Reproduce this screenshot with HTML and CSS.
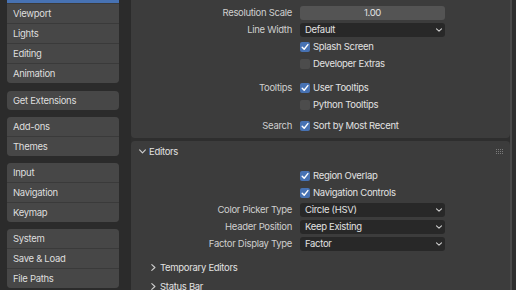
FILE: index.html
```html
<!DOCTYPE html>
<html lang="en">
<head>
    <meta charset="UTF-8">
    <title>Preferences</title>
    <link rel="stylesheet" href="styles.css">
</head>
<body>
    <div class="app">
        <nav class="nav">
            <div class="nav-group nav-first">
                <div class="nav-btn active">Interface</div>
                <div class="nav-btn">Viewport</div>
                <div class="nav-btn">Lights</div>
                <div class="nav-btn">Editing</div>
                <div class="nav-btn">Animation</div>
            </div>
            <div class="nav-group nav-ext">
                <div class="nav-btn">Get Extensions</div>
            </div>
            <div class="nav-group">
                <div class="nav-btn">Add-ons</div>
                <div class="nav-btn">Themes</div>
            </div>
            <div class="nav-group">
                <div class="nav-btn">Input</div>
                <div class="nav-btn">Navigation</div>
                <div class="nav-btn">Keymap</div>
            </div>
            <div class="nav-group">
                <div class="nav-btn">System</div>
                <div class="nav-btn">Save &amp; Load</div>
                <div class="nav-btn">File Paths</div>
            </div>
        </nav>

        <main class="region">
            <div class="panels">
                <section class="panel panel-display">
                    <div class="block">
                        <div class="row">
                            <span class="label">Resolution Scale</span>
                            <div class="ctrl"><div class="num">1.00</div></div>
                        </div>
                        <div class="row">
                            <span class="label">Line Width</span>
                            <div class="ctrl">
                                <div class="menu">Default
                                    <svg class="caret" width="6" height="4" viewBox="0 0 6 4"><path d="M0.5 0.8 L3 3.2 L5.5 0.8" /></svg>
                                </div>
                            </div>
                        </div>
                        <div class="row">
                            <span class="label"></span>
                            <div class="ctrl"><span class="check on"><svg width="10" height="10" viewBox="0 0 10 10"><path d="M2.2 5.2 L4.2 7.3 L7.9 2.6" /></svg></span>Splash Screen</div>
                        </div>
                        <div class="row">
                            <span class="label"></span>
                            <div class="ctrl"><span class="check"></span>Developer Extras</div>
                        </div>
                    </div>

                    <div class="block block-tips">
                        <div class="row">
                            <span class="label">Tooltips</span>
                            <div class="ctrl"><span class="check on"><svg width="10" height="10" viewBox="0 0 10 10"><path d="M2.2 5.2 L4.2 7.3 L7.9 2.6" /></svg></span>User Tooltips</div>
                        </div>
                        <div class="row">
                            <span class="label"></span>
                            <div class="ctrl"><span class="check"></span>Python Tooltips</div>
                        </div>
                    </div>

                    <div class="block block-search">
                        <div class="row">
                            <span class="label">Search</span>
                            <div class="ctrl"><span class="check on"><svg width="10" height="10" viewBox="0 0 10 10"><path d="M2.2 5.2 L4.2 7.3 L7.9 2.6" /></svg></span>Sort by Most Recent</div>
                        </div>
                    </div>
                </section>

                <section class="panel panel-editors">
                    <header class="panel-head">
                        <svg class="chev-down" width="7" height="5" viewBox="0 0 7 5"><path d="M0.6 0.8 L3.5 3.9 L6.4 0.8" /></svg>
                        <span>Editors</span>
                        <svg class="grip" width="8" height="5" viewBox="0 0 8 5">
                            <rect x="0" y="0" width="1" height="1" /><rect x="2" y="0" width="1" height="1" /><rect x="4" y="0" width="1" height="1" /><rect x="6" y="0" width="1" height="1" />
                            <rect x="0" y="2" width="1" height="1" /><rect x="2" y="2" width="1" height="1" /><rect x="4" y="2" width="1" height="1" /><rect x="6" y="2" width="1" height="1" />
                            <rect x="0" y="4" width="1" height="1" /><rect x="2" y="4" width="1" height="1" /><rect x="4" y="4" width="1" height="1" /><rect x="6" y="4" width="1" height="1" />
                        </svg>
                    </header>
                    <div class="panel-body">
                        <div class="row">
                            <span class="label"></span>
                            <div class="ctrl"><span class="check on"><svg width="10" height="10" viewBox="0 0 10 10"><path d="M2.2 5.2 L4.2 7.3 L7.9 2.6" /></svg></span>Region Overlap</div>
                        </div>
                        <div class="row">
                            <span class="label"></span>
                            <div class="ctrl"><span class="check on"><svg width="10" height="10" viewBox="0 0 10 10"><path d="M2.2 5.2 L4.2 7.3 L7.9 2.6" /></svg></span>Navigation Controls</div>
                        </div>
                        <div class="row">
                            <span class="label">Color Picker Type</span>
                            <div class="ctrl">
                                <div class="menu">Circle (HSV)
                                    <svg class="caret" width="6" height="4" viewBox="0 0 6 4"><path d="M0.5 0.8 L3 3.2 L5.5 0.8" /></svg>
                                </div>
                            </div>
                        </div>
                        <div class="row">
                            <span class="label">Header Position</span>
                            <div class="ctrl">
                                <div class="menu">Keep Existing
                                    <svg class="caret" width="6" height="4" viewBox="0 0 6 4"><path d="M0.5 0.8 L3 3.2 L5.5 0.8" /></svg>
                                </div>
                            </div>
                        </div>
                        <div class="row">
                            <span class="label">Factor Display Type</span>
                            <div class="ctrl">
                                <div class="menu">Factor
                                    <svg class="caret" width="6" height="4" viewBox="0 0 6 4"><path d="M0.5 0.8 L3 3.2 L5.5 0.8" /></svg>
                                </div>
                            </div>
                        </div>

                        <div class="subpanels">
                            <div class="sub-head">
                                <svg class="chev-right" width="5" height="7" viewBox="0 0 5 7"><path d="M0.8 0.6 L3.9 3.5 L0.8 6.4" /></svg>
                                <span>Temporary Editors</span>
                            </div>
                            <div class="sub-head">
                                <svg class="chev-right" width="5" height="7" viewBox="0 0 5 7"><path d="M0.8 0.6 L3.9 3.5 L0.8 6.4" /></svg>
                                <span>Status Bar</span>
                            </div>
                        </div>
                    </div>
                </section>
            </div>
            <div class="scrollbar"></div>
        </main>
    </div>
</body>
</html>
```

FILE: styles.css
```css
html, body {
    margin: 0;
    padding: 0;
    height: 100%;
    overflow: hidden;
}
body {
    font-family: Inter, "DejaVu Sans", sans-serif;
    font-size: 9.5px;
    letter-spacing: -0.3px;
    color: #e0e0e0;
    background: #2e2e2e;
}
.app {
    display: flex;
    height: 290px;
}

/* Left navigation */
.nav {
    width: 112px;
    flex: none;
    padding: 0 12px 0 7px;
    background: #2b2b2b;
}
.nav-group {
    margin-top: 7px;
    background: #3a3a3a;
    border-radius: 4px;
    overflow: hidden;
}
.nav-first {
    margin-top: -16px;
}
.nav-ext {
    margin-top: 8px;
}
.nav-btn {
    height: 19px;
    line-height: 19px;
    padding-left: 6px;
    background: #474747;
    color: #dedede;
}
.nav-btn + .nav-btn {
    margin-top: 1px;
}
.nav-btn.active {
    background: #4772b3;
    color: #fff;
}

/* Main region */
.region {
    flex: 1;
    display: flex;
    background: #2e2e2e;
}
.panels {
    flex: 1;
}
.scrollbar {
    width: 2px;
    margin: 0 4px 0 0;
    background: #4a4a4a;
}
.panel {
    background: #3c3c3c;
    border-radius: 4px;
}
.panel-display {
    margin-top: -6px;
    padding: 10px 0 4px;
}
.panel-editors {
    margin-top: 3px;
}
.block-tips {
    margin-top: 7px;
}
.block-search {
    margin-top: 4px;
}
.row {
    display: grid;
    grid-template-columns: 161px 145px;
    column-gap: 8px;
    height: 17px;
    align-items: center;
}
.label {
    text-align: right;
    color: #cfcfcf;
}
.ctrl {
    display: flex;
    align-items: center;
    color: #e2e2e2;
}
.num {
    flex: 1;
    height: 14px;
    line-height: 14px;
    text-align: center;
    background: #545454;
    border-radius: 3px;
}
.menu {
    flex: 1;
    display: flex;
    align-items: center;
    justify-content: space-between;
    height: 14px;
    padding: 0 3px 0 5px;
    background: #282828;
    border-radius: 3px;
}
.caret path,
.chev-down path,
.chev-right path {
    fill: none;
    stroke: #cfcfcf;
    stroke-width: 1.1;
    stroke-linecap: round;
    stroke-linejoin: round;
}
.check {
    width: 10px;
    height: 10px;
    margin-right: 3px;
    border-radius: 2px;
    background: #4c4c4c;
    flex: none;
    display: flex;
}
.check.on {
    background: #4772b3;
}
.check path {
    fill: none;
    stroke: #fff;
    stroke-width: 1.4;
    stroke-linecap: round;
    stroke-linejoin: round;
}

/* Editors panel */
.panel-head {
    display: flex;
    align-items: center;
    height: 21px;
    padding: 0 6px 0 8px;
    color: #e2e2e2;
}
.chev-down {
    margin-right: 3px;
}
.grip {
    margin-left: auto;
    fill: #7a7a7a;
}
.panel-body {
    padding-top: 5px;
    padding-bottom: 10px;
}
.subpanels {
    margin-top: 6px;
}
.sub-head {
    display: flex;
    align-items: center;
    height: 19px;
    padding-left: 20px;
    color: #e2e2e2;
}
.chev-right {
    margin-right: 4px;
}
```
